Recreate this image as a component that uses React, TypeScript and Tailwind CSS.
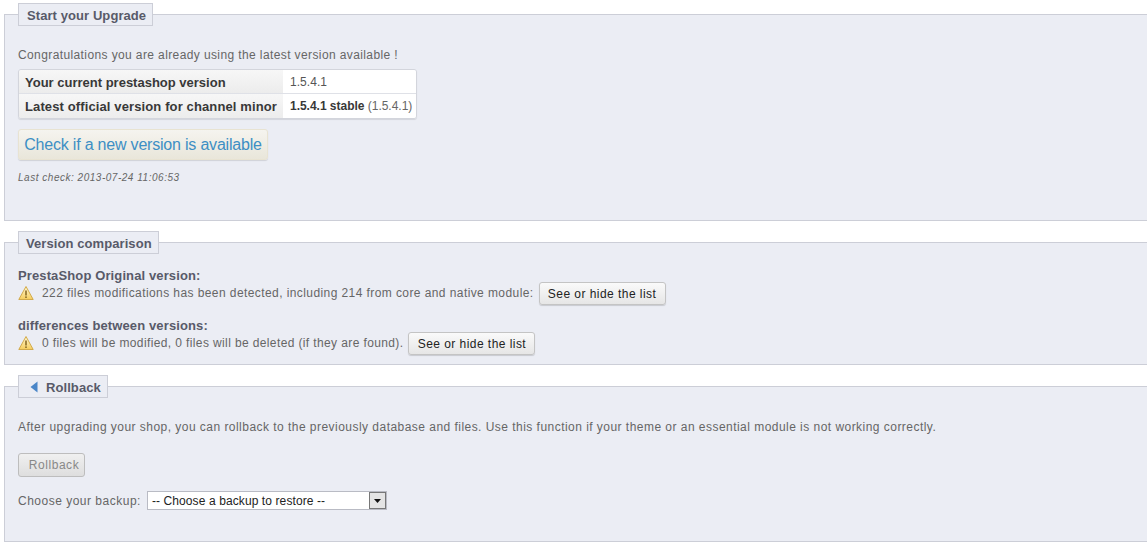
const warningIcon = (
  <svg width="16" height="16" viewBox="0 0 16 16" className="shrink-0 mr-2">
    <defs>
      <linearGradient id="warn" x1="0" y1="0" x2="0" y2="1">
        <stop offset="0" stopColor="#fff8d4" />
        <stop offset="1" stopColor="#f6cd5c" />
      </linearGradient>
    </defs>
    <path d="M8 1.5 L15.2 14.5 H0.8 Z" fill="url(#warn)" stroke="#d2aa4a" strokeLinejoin="round" />
    <rect x="7.2" y="5.5" width="1.6" height="5" fill="#8a6d28" />
    <rect x="7.2" y="11.4" width="1.6" height="1.6" fill="#8a6d28" />
  </svg>
);

function ListButton() {
  return (
    <button className="ml-[5px] h-[23px] w-[127px] pt-px rounded-[3px] border border-[#c4c4c4] bg-gradient-to-b from-[#fafafa] to-[#e6e6e6] text-[12px] tracking-[0.45px] text-[#222] shadow-[0_1px_1px_rgba(0,0,0,0.15)]">
      See or hide the list
    </button>
  );
}

export default function App() {
  return (
    <div className="w-[1147px] h-[555px] overflow-hidden bg-white pt-[3px] pl-[4px] font-['Liberation_Sans',Arial,sans-serif] text-[12px] tracking-[0.45px] text-[#666] flex flex-col">
      <fieldset className="w-[1150px] h-[218px] shrink-0 border border-r-0 border-[#ccced7] bg-[#ebedf4] pl-[13px]">
        <legend className="h-[23px] w-[134.5px] border border-[#ccced7] bg-[#ebedf4] pl-2 text-[13px] leading-[23px] tracking-[0.08px] font-bold text-[#585a69]">
          Start your Upgrade
        </legend>
        <p className="mt-[21px] leading-[16px] tracking-[0.39px]">Congratulations you are already using the latest version available !</p>
        <div className="mt-[6px] w-[399px] h-[50px] rounded-[3px] border border-[#d3d5dc] flex flex-col overflow-hidden shadow-[0_1px_1px_rgba(0,0,0,0.1)]">
          <div className="flex h-[24px] border-b border-[#dfe1e7]">
            <div className="w-[264px] pl-[6px] bg-gradient-to-b from-[#f7f7f7] to-[#ececec] text-[13px] leading-[25px] tracking-normal whitespace-nowrap font-bold text-[#383838]">
              Your current prestashop version
            </div>
            <div className="flex-1 bg-white pl-[7px] leading-[25px] tracking-[0.05px] text-[#555]">1.5.4.1</div>
          </div>
          <div className="flex flex-1">
            <div className="w-[264px] pl-[6px] bg-gradient-to-b from-[#f7f7f7] to-[#ececec] text-[13px] leading-[25px] tracking-[0.12px] whitespace-nowrap font-bold text-[#383838]">
              Latest official version for channel minor
            </div>
            <div className="flex-1 bg-white pl-[7px] leading-[25px] whitespace-nowrap tracking-[-0.02px] text-[#666]">
              <b className="text-[#383838]">1.5.4.1 stable</b> (1.5.4.1)
            </div>
          </div>
        </div>
        <button className="block mt-[10px] h-[31px] w-[250px] rounded-[3px] border border-[#e8e3d2] bg-gradient-to-b from-[#f5f4ef] to-[#e9e6da] text-[16px] text-[#3d8fc4] tracking-[-0.2px] shadow-[0_1px_1px_rgba(0,0,0,0.12)]">
          Check if a new version is available
        </button>
        <p className="mt-[11px] text-[10px] italic leading-[14px] tracking-[0.52px] text-[#666]">Last check: 2013-07-24 11:06:53</p>
      </fieldset>

      <fieldset className="mt-[10px] w-[1150px] h-[134px] shrink-0 border border-r-0 border-[#ccced7] bg-[#ebedf4] pl-[13px]">
        <legend className="h-[23px] w-[141px] border border-[#ccced7] bg-[#ebedf4] pl-[7px] text-[13px] leading-[23px] tracking-[0.08px] font-bold text-[#585a69]">
          Version comparison
        </legend>
        <p className="mt-[15px] text-[13px] leading-[14px] tracking-[0.12px] font-bold text-[#585a69]">PrestaShop Original version:</p>
        <div className="-mt-px flex items-center h-[22px]">
          {warningIcon}
          <span className="tracking-[0.415px]">222 files modifications has been detected, including 214 from core and native module:</span>
          <ListButton />
        </div>
        <p className="mt-[15px] text-[13px] leading-[14px] tracking-[0.12px] font-bold text-[#585a69]">differences between versions:</p>
        <div className="-mt-px flex items-center h-[22px]">
          {warningIcon}
          <span className="tracking-[0.38px]">0 files will be modified, 0 files will be deleted (if they are found).</span>
          <ListButton />
        </div>
      </fieldset>

      <fieldset className="mt-[10px] w-[1150px] h-[167px] shrink-0 border border-r-0 border-[#ccced7] bg-[#ebedf4] pl-[13px]">
        <legend className="h-[23px] w-[90px] border border-[#ccced7] bg-[#ebedf4] pl-[11px] pt-px text-[13px] leading-[21px] tracking-[0.08px] font-bold text-[#585a69] flex items-center gap-[8px]">
          <svg width="8" height="12" viewBox="0 0 8 12">
            <path d="M7.5 0.5 V11.5 L0.5 6 Z" fill="#4a86c8" />
          </svg>
          Rollback
        </legend>
        <p className="mt-[21px] leading-[16px] tracking-[0.465px] whitespace-nowrap">
          After upgrading your shop, you can rollback to the previously database and files. Use this function if your theme or an essential module is not working correctly.
        </p>
        <button className="block mt-[18px] h-[24px] w-[67px] pl-[5px] rounded-[3px] border border-[#bdbdbd] bg-gradient-to-b from-[#f0f0f0] to-[#dedede] text-[12px] tracking-[0.55px] text-[#888]">
          Rollback
        </button>
        <div className="mt-[14px] flex items-center gap-[6px] h-[19px]">
          <span className="tracking-[0.5px]">Choose your backup:</span>
          <div className="w-[240px] h-[19px] border border-[#b9bbc4] bg-white flex items-center justify-between pl-1 text-[#222] tracking-[0.1px]">
            <span>-- Choose a backup to restore --</span>
            <span className="w-[17px] h-[17px] border border-[#777] bg-[#e4e4e4] flex items-center justify-center">
              <svg width="7" height="4" viewBox="0 0 7 4"><path d="M0 0 H7 L3.5 4 Z" fill="#111" /></svg>
            </span>
          </div>
        </div>
      </fieldset>
    </div>
  );
}
